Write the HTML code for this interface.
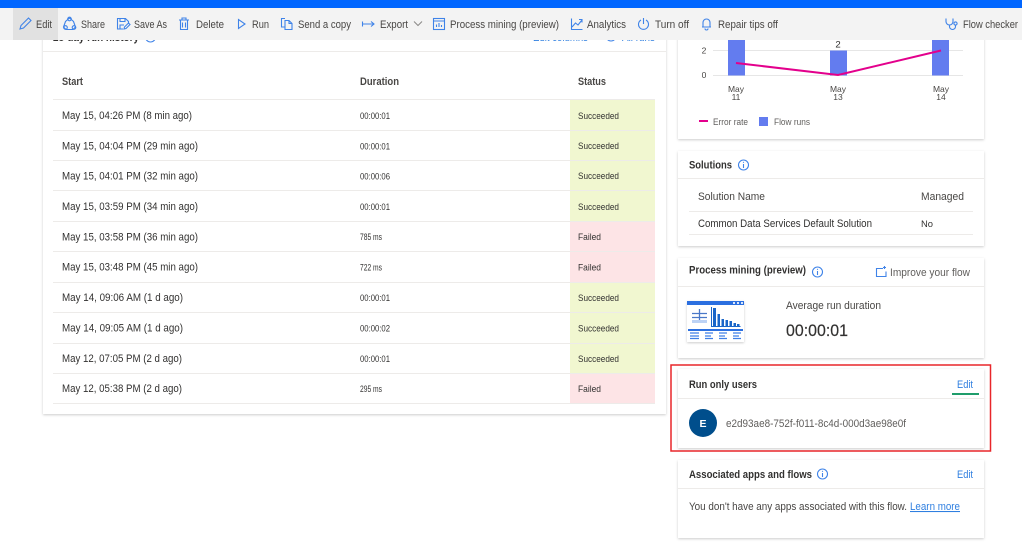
<!DOCTYPE html>
<html><head><meta charset="utf-8"><title>Flow details</title>
<style>
html,body{margin:0;padding:0;background:#fff;width:1022px;height:547px;overflow:hidden}
svg{display:block;filter:blur(.3px)}
text{font-family:"Liberation Sans",sans-serif;font-size:10.6px;fill:#323130}
.t{fill:#484644;font-size:11px}
.b{font-weight:700;fill:#323130}
.h{font-weight:700;fill:#484644}
.l{fill:#2f7fe0}
.s{font-size:9.6px}
.c{font-size:8.5px;fill:#484644}
.i{fill:none;stroke:#3f83e8;stroke-width:1.1}
.ln{stroke:#edebe9;stroke-width:1}
</style></head><body>
<svg width="1022" height="547" viewBox="0 0 1022 547" xmlns="http://www.w3.org/2000/svg">
<defs><filter id="sh" x="-5%" y="-5%" width="110%" height="110%"><feDropShadow dx="0" dy="1" stdDeviation="1.2" flood-color="#000" flood-opacity=".2"/></filter></defs>
<rect width="1022" height="547" fill="#fff"/>

<!-- Left card -->
<rect x="43" y="20" width="623" height="394" fill="#fff" filter="url(#sh)"/>
<text x="53" y="41" class="b" textLength="86" lengthAdjust="spacingAndGlyphs">28-day run history</text>
<circle cx="150.500" cy="37" r="5" class="i"/>
<text x="533" y="41" class="l" textLength="55" lengthAdjust="spacingAndGlyphs">Edit columns</text>
<circle cx="611" cy="36" r="5" class="i"/>
<text x="622" y="41" class="l" textLength="33" lengthAdjust="spacingAndGlyphs">All runs</text>
<line x1="43" x2="666" y1="51.500" y2="51.500" class="ln"/>

<text x="62" y="85" class="h" textLength="21" lengthAdjust="spacingAndGlyphs">Start</text>
<text x="360" y="85" class="h" textLength="39" lengthAdjust="spacingAndGlyphs">Duration</text>
<text x="578" y="85" class="h" textLength="28" lengthAdjust="spacingAndGlyphs">Status</text>

<rect x="570" y="100" width="85" height="30" fill="#f1f7d0"/>
<rect x="570" y="131" width="85" height="29" fill="#f1f7d0"/>
<rect x="570" y="161" width="85" height="29" fill="#f1f7d0"/>
<rect x="570" y="191" width="85" height="30" fill="#f1f7d0"/>
<rect x="570" y="222" width="85" height="29" fill="#fde4e6"/>
<rect x="570" y="252" width="85" height="30" fill="#fde4e6"/>
<rect x="570" y="283" width="85" height="29" fill="#f1f7d0"/>
<rect x="570" y="313" width="85" height="30" fill="#f1f7d0"/>
<rect x="570" y="344" width="85" height="29" fill="#f1f7d0"/>
<rect x="570" y="374" width="85" height="29" fill="#fde4e6"/>

<g class="ln">
<line x1="53" x2="655" y1="99.500" y2="99.500"/><line x1="53" x2="655" y1="130.500" y2="130.500"/>
<line x1="53" x2="655" y1="160.500" y2="160.500"/><line x1="53" x2="655" y1="190.500" y2="190.500"/>
<line x1="53" x2="655" y1="221.500" y2="221.500"/><line x1="53" x2="655" y1="251.500" y2="251.500"/>
<line x1="53" x2="655" y1="282.500" y2="282.500"/><line x1="53" x2="655" y1="312.500" y2="312.500"/>
<line x1="53" x2="655" y1="343.500" y2="343.500"/><line x1="53" x2="655" y1="373.500" y2="373.500"/>
<line x1="53" x2="655" y1="403.500" y2="403.500"/>
</g>

<text x="62" y="119" textLength="130" lengthAdjust="spacingAndGlyphs">May 15, 04:26 PM (8 min ago)</text>
<text x="360" y="119" class="s" textLength="30" lengthAdjust="spacingAndGlyphs">00:00:01</text>
<text x="578" y="119" class="s" textLength="41" lengthAdjust="spacingAndGlyphs">Succeeded</text>
<text x="62" y="149.500" textLength="136" lengthAdjust="spacingAndGlyphs">May 15, 04:04 PM (29 min ago)</text>
<text x="360" y="149.500" class="s" textLength="30" lengthAdjust="spacingAndGlyphs">00:00:01</text>
<text x="578" y="149" class="s" textLength="41" lengthAdjust="spacingAndGlyphs">Succeeded</text>
<text x="62" y="179.500" textLength="136" lengthAdjust="spacingAndGlyphs">May 15, 04:01 PM (32 min ago)</text>
<text x="360" y="179.500" class="s" textLength="30" lengthAdjust="spacingAndGlyphs">00:00:06</text>
<text x="578" y="179" class="s" textLength="41" lengthAdjust="spacingAndGlyphs">Succeeded</text>
<text x="62" y="210" textLength="136" lengthAdjust="spacingAndGlyphs">May 15, 03:59 PM (34 min ago)</text>
<text x="360" y="210" class="s" textLength="30" lengthAdjust="spacingAndGlyphs">00:00:01</text>
<text x="578" y="210" class="s" textLength="41" lengthAdjust="spacingAndGlyphs">Succeeded</text>
<text x="62" y="240.500" textLength="136" lengthAdjust="spacingAndGlyphs">May 15, 03:58 PM (36 min ago)</text>
<text x="360" y="240" class="s" textLength="22" lengthAdjust="spacingAndGlyphs">785 ms</text>
<text x="578" y="240" class="s" textLength="23" lengthAdjust="spacingAndGlyphs">Failed</text>
<text x="62" y="270.500" textLength="136" lengthAdjust="spacingAndGlyphs">May 15, 03:48 PM (45 min ago)</text>
<text x="360" y="270.500" class="s" textLength="22" lengthAdjust="spacingAndGlyphs">722 ms</text>
<text x="578" y="270.500" class="s" textLength="23" lengthAdjust="spacingAndGlyphs">Failed</text>
<text x="62" y="301" textLength="121" lengthAdjust="spacingAndGlyphs">May 14, 09:06 AM (1 d ago)</text>
<text x="360" y="301" class="s" textLength="30" lengthAdjust="spacingAndGlyphs">00:00:01</text>
<text x="578" y="301" class="s" textLength="41" lengthAdjust="spacingAndGlyphs">Succeeded</text>
<text x="62" y="331.500" textLength="121" lengthAdjust="spacingAndGlyphs">May 14, 09:05 AM (1 d ago)</text>
<text x="360" y="331.500" class="s" textLength="30" lengthAdjust="spacingAndGlyphs">00:00:02</text>
<text x="578" y="331.500" class="s" textLength="41" lengthAdjust="spacingAndGlyphs">Succeeded</text>
<text x="62" y="362" textLength="120" lengthAdjust="spacingAndGlyphs">May 12, 07:05 PM (2 d ago)</text>
<text x="360" y="362" class="s" textLength="30" lengthAdjust="spacingAndGlyphs">00:00:01</text>
<text x="578" y="362" class="s" textLength="41" lengthAdjust="spacingAndGlyphs">Succeeded</text>
<text x="62" y="392" textLength="120" lengthAdjust="spacingAndGlyphs">May 12, 05:38 PM (2 d ago)</text>
<text x="360" y="392" class="s" textLength="22" lengthAdjust="spacingAndGlyphs">295 ms</text>
<text x="578" y="392" class="s" textLength="23" lengthAdjust="spacingAndGlyphs">Failed</text>

<!-- Chart card -->
<rect x="678" y="20" width="306" height="119" fill="#fff" filter="url(#sh)"/>
<line x1="713" x2="963" y1="50.500" y2="50.500" stroke="#e6e6e6"/>
<line x1="713" x2="963" y1="75.500" y2="75.500" stroke="#e6e6e6"/>
<rect x="728" y="38" width="17" height="37.500" fill="#637cef"/>
<rect x="830" y="50.500" width="17" height="25" fill="#637cef"/>
<rect x="932" y="38" width="17" height="37.500" fill="#637cef"/>
<polyline points="736,63 838,75 941,50.500" fill="none" stroke="#e3008c" stroke-width="2"/>
<text x="838" y="47.500" class="s" text-anchor="middle">2</text>
<text x="704" y="53.500" class="c" text-anchor="middle">2</text>
<text x="704" y="78" class="c" text-anchor="middle">0</text>
<text x="736" y="92" class="c" text-anchor="middle">May</text><text x="736" y="100" class="c" text-anchor="middle">11</text>
<text x="838" y="92" class="c" text-anchor="middle">May</text><text x="838" y="100" class="c" text-anchor="middle">13</text>
<text x="941" y="92" class="c" text-anchor="middle">May</text><text x="941" y="100" class="c" text-anchor="middle">14</text>
<rect x="699" y="120" width="9" height="2" fill="#e3008c"/>
<text x="713" y="125" class="s" style="fill:#605e5c" textLength="35" lengthAdjust="spacingAndGlyphs">Error rate</text>
<rect x="759" y="117" width="9" height="9" fill="#637cef"/>
<text x="774" y="125" class="s" style="fill:#605e5c" textLength="36" lengthAdjust="spacingAndGlyphs">Flow runs</text>

<!-- Solutions -->
<rect x="678" y="151" width="306" height="95" fill="#fff" filter="url(#sh)"/>
<text x="689" y="168.500" class="b" textLength="43" lengthAdjust="spacingAndGlyphs">Solutions</text>
<circle cx="743.500" cy="165" r="5" class="i"/><line x1="743.500" x2="743.500" y1="164" y2="168" class="i"/><circle cx="743.500" cy="162.300" r=".6" fill="#3f83e8"/>
<line x1="678" x2="984" y1="178.500" y2="178.500" class="ln"/>
<text x="698" y="200" textLength="67" lengthAdjust="spacingAndGlyphs" style="fill:#484644">Solution Name</text>
<text x="921" y="200" textLength="43" lengthAdjust="spacingAndGlyphs" style="fill:#484644">Managed</text>
<line x1="689" x2="973" y1="211.500" y2="211.500" class="ln"/>
<text x="698" y="227" textLength="174" lengthAdjust="spacingAndGlyphs">Common Data Services Default Solution</text>
<text x="921" y="227" class="s" textLength="12" lengthAdjust="spacingAndGlyphs">No</text>
<line x1="689" x2="973" y1="234.500" y2="234.500" class="ln"/>

<!-- Process mining -->
<rect x="678" y="258" width="306" height="100" fill="#fff" filter="url(#sh)"/>
<text x="689" y="273.500" class="b" textLength="117" lengthAdjust="spacingAndGlyphs">Process mining (preview)</text>
<circle cx="817.500" cy="272" r="5" class="i"/><line x1="817.500" x2="817.500" y1="271" y2="275" class="i"/><circle cx="817.500" cy="269.300" r=".6" fill="#3f83e8"/>
<path d="M883 268.500h-6.500v8h9.500v-5M884.500 266v3M883 267.500h3" class="i"/>
<text x="890" y="276" textLength="80" lengthAdjust="spacingAndGlyphs" style="fill:#605e5c">Improve your flow</text>
<line x1="678" x2="984" y1="286.500" y2="286.500" class="ln"/>
<!-- thumbnail -->
<rect x="687" y="301" width="57" height="41" fill="#fff" filter="url(#sh)"/>
<rect x="687" y="301" width="57" height="4" fill="#2b6fe0"/>
<g fill="#dbe7fa"><rect x="733" y="302" width="2" height="2"/><rect x="737" y="302" width="2" height="2"/><rect x="741" y="302" width="2" height="2"/></g>
<path d="M692 313.500h15M692 317.500h15M699.500 309v12" stroke="#4a78c8" stroke-width="1.300" fill="none"/>
<rect x="692" y="320" width="15" height="3" fill="#bcd2f5"/>
<path d="M711.500 307v19.500h29" stroke="#1a66c9" stroke-width="1" fill="none"/>
<g fill="#1a66c9"><rect x="713" y="308" width="3" height="18"/><rect x="717.500" y="314" width="2.500" height="12"/><rect x="721.500" y="319" width="2.500" height="7"/><rect x="725.500" y="320" width="2.500" height="6"/><rect x="729.500" y="321" width="2.500" height="5"/><rect x="733.500" y="323" width="2.500" height="3"/><rect x="737" y="324" width="2.500" height="2"/></g>
<rect x="688" y="329" width="55" height="2" fill="#2b6fe0"/>
<g stroke="#3f7fe6" stroke-width="1.200"><path d="M690 333h9M690 336h9M690 338.500h9M705 333h8M705 336h6M705 338.500h8M719 333h8M719 336h6M719 338.500h8M733 333h8M733 336h6M733 338.500h8"/></g>
<text x="786" y="309" textLength="95" lengthAdjust="spacingAndGlyphs" style="fill:#484644">Average run duration</text>
<text x="786" y="336" style="font-size:17px;stroke:#323130;stroke-width:.2" textLength="62" lengthAdjust="spacingAndGlyphs">00:00:01</text>

<!-- Run only users -->
<rect x="678" y="369" width="306" height="79" fill="#fff" filter="url(#sh)"/>
<text x="689" y="388" class="b" textLength="68" lengthAdjust="spacingAndGlyphs">Run only users</text>
<text x="957" y="388" class="l" textLength="16" lengthAdjust="spacingAndGlyphs">Edit</text>
<rect x="952" y="393" width="27" height="2" fill="#1f9d6b"/>
<line x1="678" x2="984" y1="398.500" y2="398.500" class="ln"/>
<circle cx="703" cy="423" r="14" fill="#004e8c"/>
<text x="703" y="427" text-anchor="middle" style="fill:#fff;font-size:10.5px;font-weight:700">E</text>
<text x="726" y="427" textLength="180" lengthAdjust="spacingAndGlyphs" style="fill:#605e5c">e2d93ae8-752f-f011-8c4d-000d3ae98e0f</text>
<rect x="671" y="365" width="319.500" height="86" fill="none" stroke="#e8262a" stroke-width="1.500"/>

<!-- Associated -->
<rect x="678" y="460" width="306" height="78" fill="#fff" filter="url(#sh)"/>
<text x="689" y="478" class="b" textLength="123" lengthAdjust="spacingAndGlyphs">Associated apps and flows</text>
<circle cx="822.500" cy="474" r="5" class="i"/><line x1="822.500" x2="822.500" y1="473" y2="477" class="i"/><circle cx="822.500" cy="471.300" r=".6" fill="#3f83e8"/>
<text x="957" y="478" class="l" textLength="16" lengthAdjust="spacingAndGlyphs">Edit</text>
<line x1="678" x2="984" y1="488.500" y2="488.500" class="ln"/>
<text x="689" y="510" textLength="218" lengthAdjust="spacingAndGlyphs" style="fill:#484644">You don't have any apps associated with this flow.</text>
<text x="910" y="510" class="l" text-decoration="underline" textLength="50" lengthAdjust="spacingAndGlyphs">Learn more</text>

<!-- Top bar and toolbar -->
<rect x="0" y="0" width="1022" height="8" fill="#0066ff"/>
<rect x="0" y="8" width="1022" height="32" fill="#f3f3f3"/>
<rect x="13" y="8" width="45" height="32" fill="#e1e1e1"/>

<path d="M20 29l1-3.500 7.500-7.500 2.500 2.500-7.500 7.500z" class="i"/>
<text x="36" y="28" class="t" textLength="16" lengthAdjust="spacingAndGlyphs">Edit</text>

<path d="M69.500 18l4 3.500 2 5.500-2.500 2.500h-7l-2.500-2.500 2-5.500z" class="i"/><circle cx="69.500" cy="19" r="1.800" class="i" fill="#f3f3f3"/><circle cx="65.500" cy="27.500" r="1.800" class="i" fill="#f3f3f3"/><circle cx="74" cy="27.500" r="1.800" class="i" fill="#f3f3f3"/>
<text x="81" y="28" class="t" textLength="24" lengthAdjust="spacingAndGlyphs">Share</text>

<path d="M123 29h-5.500v-10.500h8l3 3v2.500M120 18.500v3h5v-3M120 29v-4h4" class="i"/><path d="M124 29l.5-2 4-4 1.500 1.500-4 4z" class="i"/>
<text x="134" y="28" class="t" textLength="33" lengthAdjust="spacingAndGlyphs">Save As</text>

<path d="M179 20h10M182 20v-2h4v2M180.500 20v9.500h7V20M182.500 22.500v5M185.500 22.500v5" class="i"/>
<text x="196" y="28" class="t" textLength="28" lengthAdjust="spacingAndGlyphs">Delete</text>

<path d="M238.500 19.500v9l6.500-4.500z" class="i"/>
<text x="252" y="28" class="t" textLength="17" lengthAdjust="spacingAndGlyphs">Run</text>

<path d="M285 18.500h-3.500v8.500h3M285 20.500h4l3 3v6h-7zM289 20.500v3h3" class="i"/>
<text x="298" y="28" class="t" textLength="53" lengthAdjust="spacingAndGlyphs">Send a copy</text>

<path d="M362.500 21.500v5M363 24h11M371 21.500l3 2.500-3 2.500" class="i"/>
<text x="380" y="28" class="t" textLength="28" lengthAdjust="spacingAndGlyphs">Export</text>
<path d="M414 21.500l4 4 4-4" fill="none" stroke="#8a8886" stroke-width="1"/>

<rect x="433.500" y="18.500" width="11" height="11" class="i"/><path d="M433.500 21h11M436.500 27v-2.500M439 27v-4M441.500 27v-2" class="i"/>
<text x="450" y="28" class="t" textLength="109" lengthAdjust="spacingAndGlyphs">Process mining (preview)</text>

<path d="M571.500 18.500v11h11M572 27l3.500-4 2.500 2 4-5M579 19.500h3v3" class="i"/>
<text x="587" y="28" class="t" textLength="39" lengthAdjust="spacingAndGlyphs">Analytics</text>

<path d="M641 20a5 5 0 1 0 5 0M643.500 18v6" class="i"/>
<text x="655" y="28" class="t" textLength="34" lengthAdjust="spacingAndGlyphs">Turn off</text>

<path d="M702 27h9M703 27v-4.500a3.500 3.500 0 0 1 7 0V27M705 28.500a1.500 1.500 0 0 0 3 0" class="i"/>
<text x="718" y="28" class="t" textLength="60" lengthAdjust="spacingAndGlyphs">Repair tips off</text>

<path d="M946 18.500v3a3.500 3.500 0 0 0 7 0v-3M949.500 25v1.500a3 3 0 0 0 6 0v-1" class="i"/><circle cx="955.500" cy="23.500" r="1.600" class="i"/>
<text x="963" y="28" class="t" textLength="55" lengthAdjust="spacingAndGlyphs">Flow checker</text>
</svg>
</body></html>
